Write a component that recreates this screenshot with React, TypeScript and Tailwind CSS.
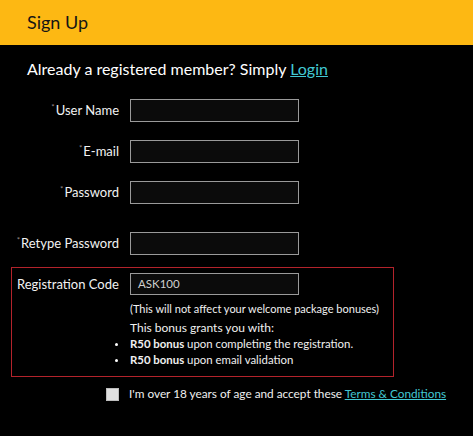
import React from "react";

const Field = ({ label, required = true, value = "" }: { label: string; required?: boolean; value?: string }) => (
  <div className="flex items-center h-[23px]">
    <div className="w-[119px] text-right text-[13px] text-[#f2f2f2] leading-none whitespace-nowrap">
      {required && <span className="text-[8px] align-top text-[#9a8a8a] relative top-[-1px] mr-[1px]">*</span>}
      {label}
    </div>
    <div className="ml-[11px] w-[169px] h-[23px] border border-[#9a9a9a] bg-[#0b0b0b] text-[12px] text-[#cfcfcf] px-[7px] flex items-center">
      {value}
    </div>
  </div>
);

export default function App() {
  return (
    <div className="w-[473px] h-[436px] bg-black overflow-hidden" style={{ fontFamily: "Lato, 'Open Sans', sans-serif" }}>
      <div className="h-[45px] bg-[#fdb813] flex items-center px-[27px] text-[18px] text-[#151515]">Sign Up</div>
      <div className="mt-[12px] px-[27px] text-[16px] leading-[24px] text-white">
        Already a registered member? Simply <span className="text-[#42c8d3] underline">Login</span>
      </div>
      <div className="mt-[18px] flex flex-col gap-[18px]">
        <Field label="User Name" />
        <Field label="E-mail" />
        <Field label="Password" />
      </div>
      <div className="mt-[28px]">
        <Field label="Retype Password" />
      </div>
      <div className="mt-[12px] ml-[11px] w-[383px] border border-[#b3232b] pt-[5px] pb-[8px]">
        <div className="flex items-center h-[22px]">
          <div className="w-[107px] text-[13px] text-[#f2f2f2] pl-[5px] leading-none whitespace-nowrap">Registration Code</div>
          <div className="ml-[11px] w-[169px] h-[22px] border border-[#9a9a9a] bg-[#0b0b0b] text-[11.5px] text-[#cfcfcf] px-[7px] flex items-center">
            ASK100
          </div>
        </div>
        <div className="pl-[118px] text-[11.4px] text-[#f0f0f0] leading-[16px] whitespace-nowrap">
          <div className="mt-[6px] text-[11px]">(This will not affect your welcome package bonuses)</div>
          <div className="mt-[3px] text-[12px]">This bonus grants you with:</div>
          {["upon completing the registration.", "upon email validation"].map((t) => (
            <div key={t} className="relative">
              <span className="absolute left-[-15px] top-[7px] w-[3px] h-[3px] rounded-full bg-white" />
              <b>R50 bonus</b> {t}
            </div>
          ))}
        </div>
      </div>
      <div className="mt-[9px] flex items-center">
        <div className="ml-[106px] w-[13px] h-[13px] bg-[#e0e0e0] border border-[#bdbdbd]" />
        <div className="ml-[10px] text-[11.8px] text-[#f0f0f0] leading-[16px] whitespace-nowrap">
          I'm over 18 years of age and accept these <span className="text-[#42c8d3] underline">Terms &amp; Conditions</span>
        </div>
      </div>
    </div>
  );
}
